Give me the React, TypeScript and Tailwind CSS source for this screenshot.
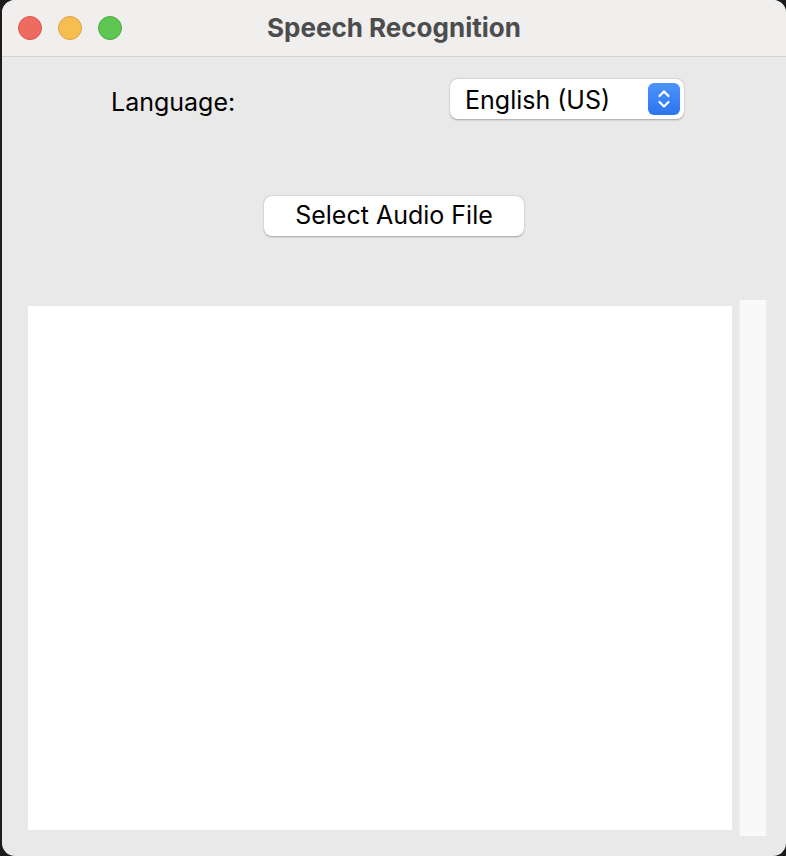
export default function App() {
  return (
    <div className="w-[786px] h-[856px] bg-[#1c1c1c] pl-[2px] font-['Inter','Liberation_Sans',sans-serif]">
      <div className="w-[784px] h-[856px] rounded-[13px] overflow-hidden bg-[#e9e9e9] flex flex-col">
        {/* title bar */}
        <div className="relative h-[57px] shrink-0 bg-[#f0efee] border-b border-[#d3d2d1] flex items-center justify-center">
          <div className="absolute left-[16px] top-[16px] flex gap-[16px]">
            <span className="w-[24px] h-[24px] rounded-full bg-[#ee6b60] border border-[#d9574d]" />
            <span className="w-[24px] h-[24px] rounded-full bg-[#f6be50] border border-[#dea53c]" />
            <span className="w-[24px] h-[24px] rounded-full bg-[#5fc553] border border-[#4aab40]" />
          </div>
          <span className="text-[26px] font-bold text-[#4c4c4c] -mt-[1px]">Speech Recognition</span>
        </div>

        {/* language row */}
        <div className="flex items-center mt-[22px] h-[40px]">
          <span className="ml-[109px] w-[339px] text-[25px] text-black mt-[8px]">Language:</span>
          <div className="w-[234px] h-[40px] bg-white rounded-[8px] shadow-[0_0.5px_2px_rgba(0,0,0,0.3)] flex items-center pl-[15px] pr-[4px] justify-between">
            <span className="text-[25px] text-black mt-[4px]">English (US)</span>
            <span className="w-[32px] h-[32px] rounded-[6px] bg-gradient-to-b from-[#4d93fa] to-[#2c74ef] flex items-center justify-center">
              <svg width="14" height="22" viewBox="0 0 14 22" fill="none" stroke="white" strokeWidth="2.2" strokeLinecap="round" strokeLinejoin="round">
                <path d="M2.5 8 L7 3.5 L11.5 8" />
                <path d="M2.5 14 L7 18.5 L11.5 14" />
              </svg>
            </span>
          </div>
        </div>

        {/* button */}
        <div className="mt-[77px] ml-[262px]">
          <button className="w-[260px] h-[40px] bg-white rounded-[8px] shadow-[0_0.5px_2px_rgba(0,0,0,0.3)] text-[25px] text-black flex items-center justify-center">
            Select Audio File
          </button>
        </div>

        {/* text area + scrollbar */}
        <div className="flex mt-[64px] ml-[26px] gap-[7px]">
          <div className="w-[704px] h-[524px] mt-[6px] bg-white" />
          <div className="w-[29px] h-[536px] bg-[#f9f9f9] border-l border-[#f2f2f2] border-r-[2px] border-r-[#ececec]" />
        </div>
      </div>
    </div>
  );
}
